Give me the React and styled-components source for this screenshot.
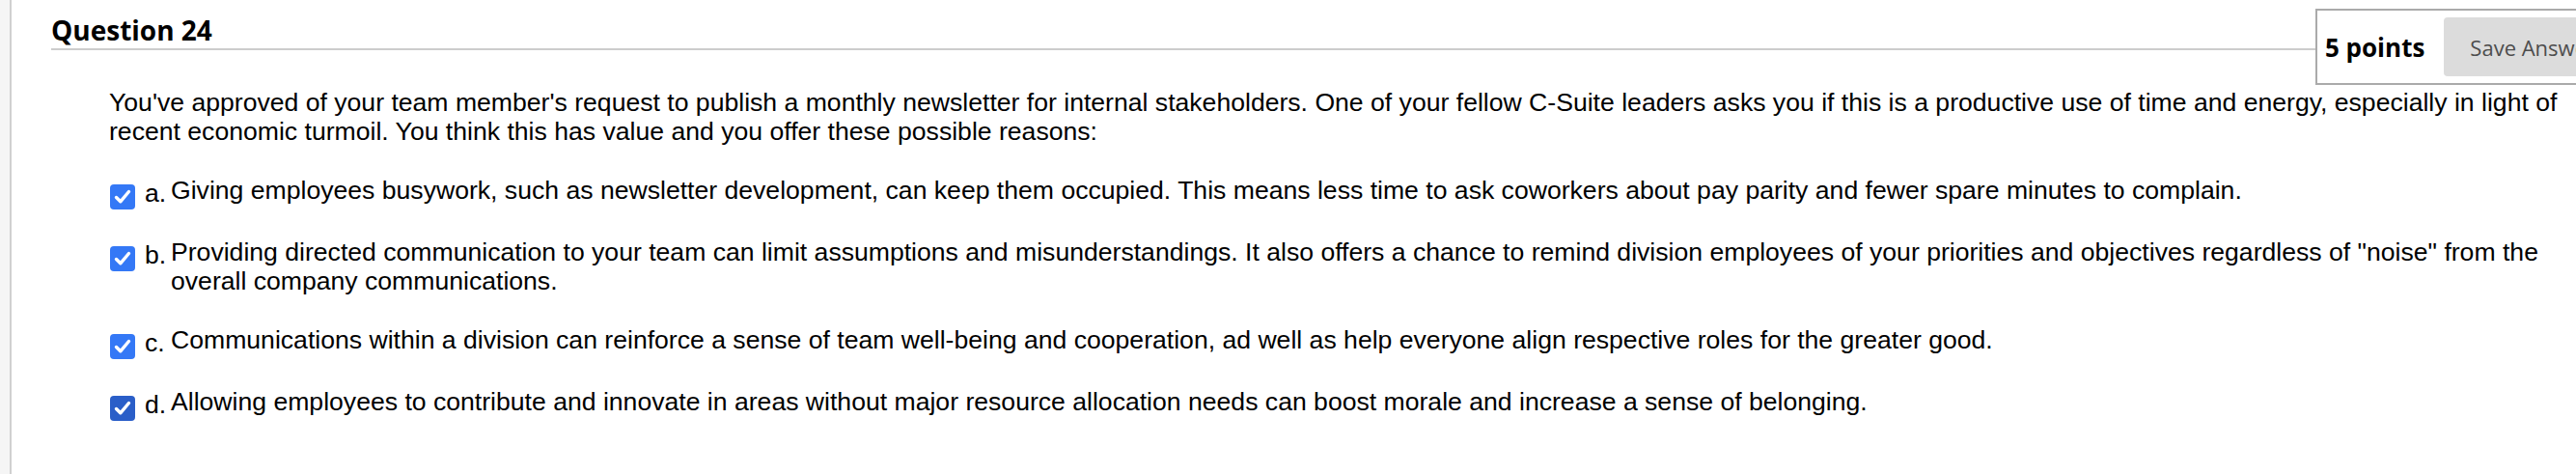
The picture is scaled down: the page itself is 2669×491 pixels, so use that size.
import React from "react";
import styled, { createGlobalStyle } from "styled-components";

const Global = createGlobalStyle`
  html, body { margin: 0; padding: 0; background: #fff; overflow: hidden; }
  body { font-family: "Liberation Sans", Arial, sans-serif; color: #000; }
`;

const Page = styled.div`
  display: flex;
  width: 2669px;
  height: 491px;
  overflow: hidden;
`;

const Rail = styled.div`
  flex: 0 0 10px;
  background: #f5f5f5;
  border-right: 2px solid #d0d0d0;
`;

const Main = styled.div`
  flex: 1;
  min-width: 0;
  padding: 9px 0 0 41px;
`;

const Header = styled.div`
  display: flex;
  align-items: flex-start;
`;

const Title = styled.h2`
  flex: 1;
  min-width: 0;
  margin: 0;
  padding-top: 3px;
  font-family: "Open Sans", sans-serif;
  font-weight: 700;
  font-size: 28px;
  line-height: 38px;
  color: #000;
  border-bottom: 2px solid #cccccc;
`;

const PointsBox = styled.div`
  flex: 0 0 auto;
  display: flex;
  align-items: center;
  gap: 20px;
  padding: 7px;
  border: 2px solid #aaaaaa;
  margin-right: -56px;
  background: #fff;
`;

const Points = styled.span`
  font-family: "Open Sans", sans-serif;
  font-weight: 700;
  font-size: 26px;
  color: #000;
  padding-left: 1px;
`;

const SaveButton = styled.button`
  height: 61px;
  padding: 0 27px;
  border: none;
  border-radius: 4px;
  background: #dcdcdc;
  color: #4d4d4d;
  font-family: "Open Sans", sans-serif;
  font-size: 22px;
  white-space: nowrap;
`;

const Body = styled.div`
  padding: 0 8px 0 60px;
`;

const Prompt = styled.p`
  margin: 3px 0 31px;
  font-size: 26.6px;
  line-height: 30px;
`;

const Options = styled.ul`
  list-style: none;
  margin: 0;
  padding: 0;
  display: flex;
  flex-direction: column;
  gap: 31px;
`;

const Option = styled.li`
  display: flex;
  align-items: flex-start;
  font-size: 26.6px;
  line-height: 30px;
`;

const Box = styled.span`
  flex: 0 0 26px;
  height: 26px;
  margin: 9px 10px -5px 1px;
  display: block;
`;

const Letter = styled.span`
  flex: 0 0 27px;
  padding-top: 3px;
`;

const Text = styled.span`
  flex: 1;
  min-width: 0;
`;

const Check = ({ dark }) => (
  <Box>
    <svg width="26" height="26" viewBox="0 0 26 26">
      <rect x="0" y="0" width="26" height="26" rx="4" fill={dark ? "#2a5ec8" : "#3478f6"} />
      <path d="M6.5 13.5 L10.8 17.8 L19.5 7.5" fill="none" stroke="#fff" strokeWidth="3.4" strokeLinecap="round" strokeLinejoin="round" />
    </svg>
  </Box>
);

const options = [
  { l: "a.", t: "Giving employees busywork, such as newsletter development, can keep them occupied. This means less time to ask coworkers about pay parity and fewer spare minutes to complain." },
  { l: "b.", t: "Providing directed communication to your team can limit assumptions and misunderstandings. It also offers a chance to remind division employees of your priorities and objectives regardless of \"noise\" from the overall company communications." },
  { l: "c.", t: "Communications within a division can reinforce a sense of team well-being and cooperation, ad well as help everyone align respective roles for the greater good." },
  { l: "d.", t: "Allowing employees to contribute and innovate in areas without major resource allocation needs can boost morale and increase a sense of belonging.", dark: true },
];

export default function App() {
  return (
    <>
      <Global />
      <Page>
        <Rail />
        <Main>
          <Header>
            <Title>Question 24</Title>
            <PointsBox>
              <Points>5 points</Points>
              <SaveButton>Save Answer</SaveButton>
            </PointsBox>
          </Header>
          <Body>
            <Prompt>
              You've approved of your team member's request to publish a monthly newsletter for internal stakeholders. One of your fellow C-Suite leaders asks you if this is a productive use of time and energy, especially in light of recent economic turmoil. You think this has value and you offer these possible reasons:
            </Prompt>
            <Options>
              {options.map((o) => (
                <Option key={o.l}>
                  <Check dark={o.dark} />
                  <Letter>{o.l}</Letter>
                  <Text>{o.t}</Text>
                </Option>
              ))}
            </Options>
          </Body>
        </Main>
      </Page>
    </>
  );
}
